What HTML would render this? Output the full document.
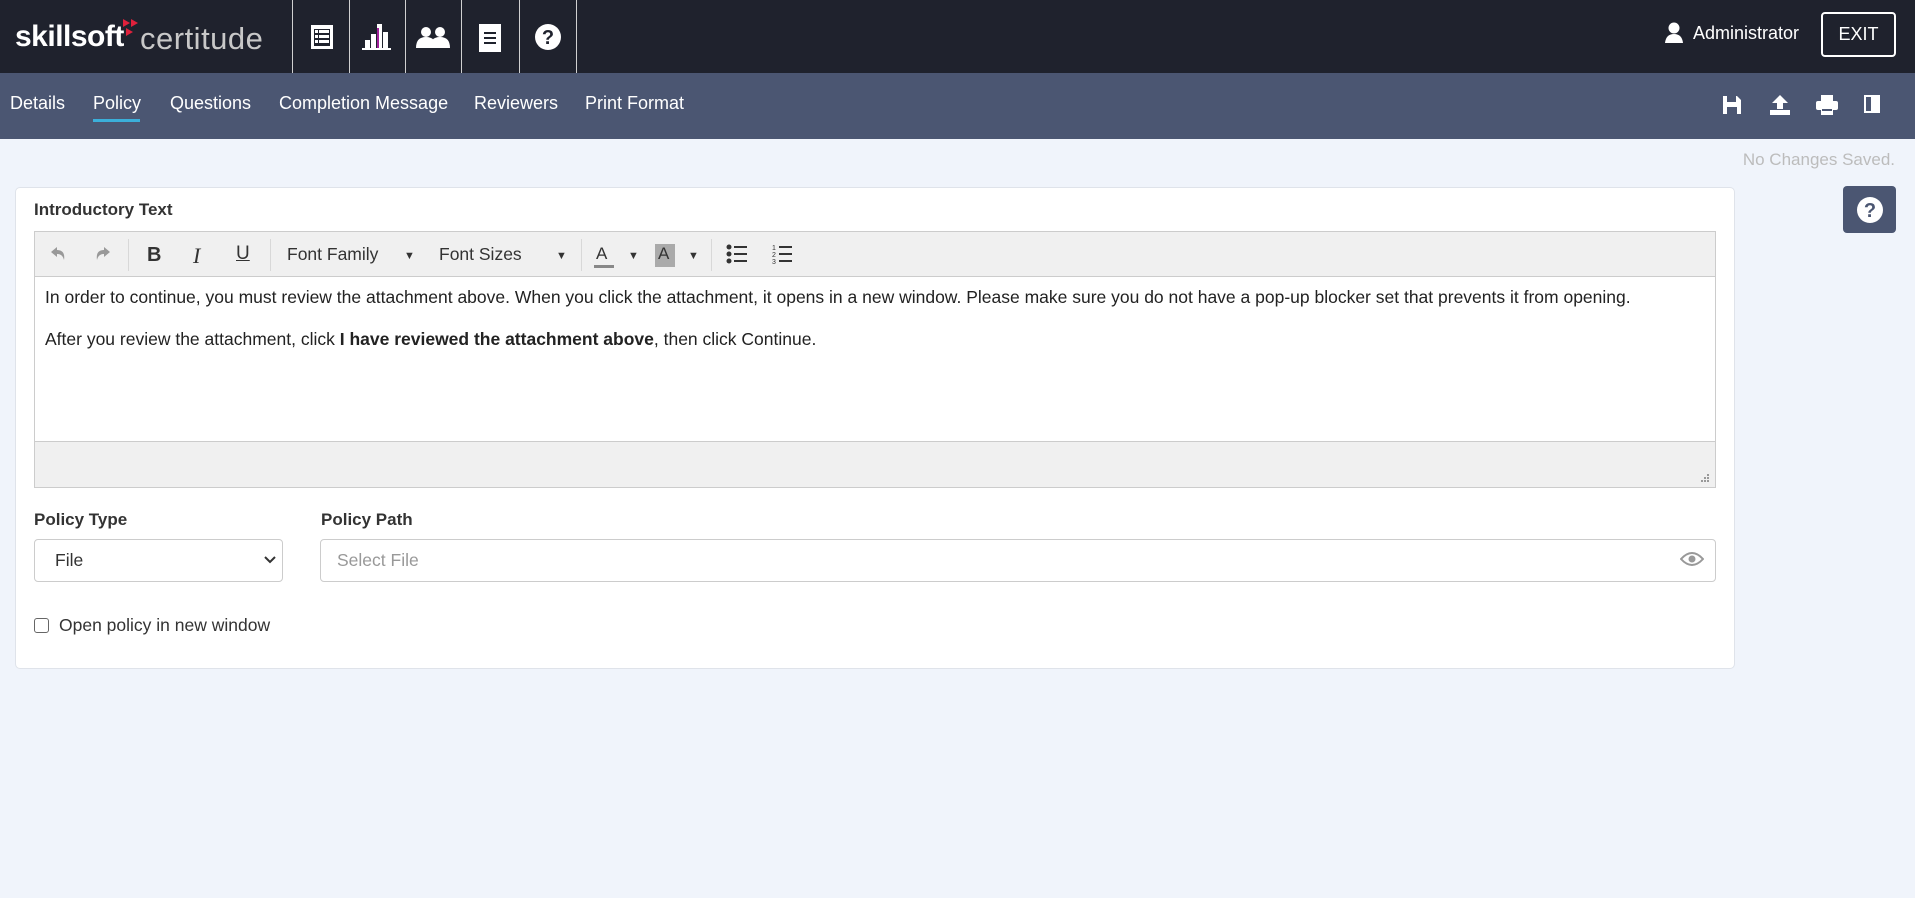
<!DOCTYPE html>
<html><head><meta charset="utf-8"><style>
*{box-sizing:border-box;margin:0;padding:0}
body{width:1915px;height:898px;background:#f0f4fb;font-family:"Liberation Sans",Arial,sans-serif;position:relative;overflow:hidden;color:#333}
.abs{position:absolute}
.top{left:0;top:0;width:1915px;height:73px;background:#1f222d}
.sep{top:0;width:1px;height:73px;background:#d0d0d0}
.sub{left:0;top:73px;width:1915px;height:66px;background:#4b5672}
.tab{top:93px;color:#fff;font-size:18px}
.card{left:15px;top:187px;width:1720px;height:482px;background:#fff;border:1px solid #dfe3ea;border-radius:5px}
.lbl{font-weight:bold;font-size:17px;color:#333}
.tb{color:#333;font-size:18px}
.ar{color:#333;font-size:11px;top:250px}
</style></head><body>
<div class="abs top"></div>
<div class="abs" style="left:15px;top:20px;font-size:30px;color:#fff;letter-spacing:-0.5px"><b style="font-weight:bold">skillsoft</b></div>
<svg class="abs" style="left:123px;top:19px" width="20" height="18"><polygon points="0,0 7,4 0,8" fill="#e0213c"/><polygon points="8,0 15,4 8,8" fill="#e0213c"/><polygon points="3,9 10,13 3,17" fill="#e0213c"/></svg>
<div class="abs" style="left:140px;top:21px;font-size:31px;color:#c8c8c8;font-weight:300;letter-spacing:0.5px">certitude</div>
<div class="abs sep" style="left:292px"></div><div class="abs sep" style="left:349px"></div><div class="abs sep" style="left:405px"></div><div class="abs sep" style="left:461px"></div><div class="abs sep" style="left:519px"></div><div class="abs sep" style="left:576px"></div>
<svg class="abs" style="left:310px;top:24px" width="24" height="26"><rect x="1" y="1" width="22" height="24" fill="#fff"/><rect x="4" y="5" width="16" height="17" fill="#1f222d"/><g fill="#fff"><rect x="5" y="6" width="3" height="3"/><rect x="9" y="6" width="10" height="3"/><rect x="5" y="11" width="3" height="3"/><rect x="9" y="11" width="10" height="3"/><rect x="5" y="16" width="3" height="3"/><rect x="9" y="16" width="10" height="3"/></g></svg>
<svg class="abs" style="left:362px;top:22px" width="30" height="28"><g fill="#fff"><rect x="3" y="18" width="5" height="8"/><rect x="9" y="12" width="5" height="14"/><rect x="15" y="2" width="5" height="24"/><rect x="21" y="10" width="5" height="16"/><rect x="0" y="26" width="29" height="2"/></g><rect x="15" y="6" width="2" height="20" fill="#a0209a"/></svg>
<svg class="abs" style="left:414px;top:26px" width="40" height="24"><g fill="#fff"><circle cx="12" cy="6" r="5"/><path d="M2 22 Q2 11 12 11 Q22 11 22 22Z"/><circle cx="26" cy="6" r="5"/><path d="M16 22 Q16 11 26 11 Q36 11 36 22Z"/></g></svg>
<svg class="abs" style="left:479px;top:22px" width="22" height="30"><rect x="0" y="2" width="22" height="28" fill="#fff"/><g fill="#1f222d"><rect x="5" y="10" width="12" height="2"/><rect x="5" y="15" width="12" height="2"/><rect x="5" y="20" width="12" height="2"/></g></svg>
<svg class="abs" style="left:534px;top:23px" width="28" height="28"><circle cx="14" cy="14" r="13" fill="#fff"/><text x="14" y="21" text-anchor="middle" font-family="Liberation Sans" font-weight="bold" font-size="20" fill="#1f222d">?</text></svg>
<svg class="abs" style="left:1664px;top:22px" width="20" height="22"><circle cx="10" cy="6" r="5.5" fill="#fff"/><path d="M1 21 Q2 12 10 12 Q18 12 19 21Z" fill="#fff"/></svg>
<div class="abs" style="left:1693px;top:23px;color:#fff;font-size:18px">Administrator</div>
<div class="abs" style="left:1821px;top:12px;width:75px;height:45px;border:2px solid #fff;border-radius:4px;color:#fff;font-size:18px;text-align:center;line-height:41px">EXIT</div>
<div class="abs sub"></div>
<div class="abs tab" style="left:10px">Details</div>
<div class="abs tab" style="left:93px">Policy</div>
<div class="abs" style="left:93px;top:119px;width:47px;height:3px;background:#3bafda"></div>
<div class="abs tab" style="left:170px">Questions</div>
<div class="abs tab" style="left:279px">Completion Message</div>
<div class="abs tab" style="left:474px">Reviewers</div>
<div class="abs tab" style="left:585px">Print Format</div>
<svg class="abs" style="left:1722px;top:95px" width="20" height="20"><path d="M1 1H15L19 5V19H1Z" fill="#fff"/><rect x="5" y="1" width="9" height="6" fill="#4b5672"/><rect x="5" y="12" width="10" height="7" fill="#4b5672"/></svg>
<svg class="abs" style="left:1769px;top:95px" width="22" height="20"><path d="M11 0L19 8H14V14H8V8H3Z" fill="#fff"/><rect x="1" y="15" width="20" height="5" fill="#fff"/></svg>
<svg class="abs" style="left:1816px;top:95px" width="22" height="20"><rect x="5" y="0" width="12" height="6" fill="#fff"/><rect x="0" y="6" width="22" height="9" rx="2" fill="#fff"/><rect x="5" y="13" width="12" height="7" fill="#fff"/><rect x="6" y="14" width="10" height="2" fill="#4b5672"/></svg>
<svg class="abs" style="left:1864px;top:94px" width="18" height="20"><rect x="1" y="2" width="14" height="16" fill="none" stroke="#fff" stroke-width="2"/><path d="M7 1L16 3V19L7 17Z" fill="#fff"/></svg>
<div class="abs" style="right:20px;top:150px;color:#bcbcbc;font-size:17px">No Changes Saved.</div>
<div class="abs" style="left:1843px;top:186px;width:53px;height:47px;background:#4b5672;border-radius:4px"></div>
<svg class="abs" style="left:1856px;top:196px" width="28" height="28"><circle cx="14" cy="14" r="13" fill="#fff"/><text x="14" y="21" text-anchor="middle" font-family="Liberation Sans" font-weight="bold" font-size="20" fill="#4b5672">?</text></svg>
<div class="abs card"></div>
<div class="abs lbl" style="left:34px;top:200px">Introductory Text</div>
<div class="abs" style="left:34px;top:231px;width:1682px;height:257px;border:1px solid #ccc;background:#fff"></div>
<div class="abs" style="left:35px;top:232px;width:1680px;height:45px;background:#f0f0f0;border-bottom:1px solid #ccc"></div>
<div class="abs" style="left:35px;top:441px;width:1680px;height:46px;background:#f0f0f0;border-top:1px solid #ccc"></div>
<div class="abs" style="left:128px;top:239px;width:1px;height:32px;background:#d8d8d8"></div>
<div class="abs" style="left:270px;top:239px;width:1px;height:32px;background:#d8d8d8"></div>
<div class="abs" style="left:581px;top:239px;width:1px;height:32px;background:#d8d8d8"></div>
<div class="abs" style="left:711px;top:239px;width:1px;height:32px;background:#d8d8d8"></div>
<svg class="abs" style="left:50px;top:246px" width="16" height="14"><path d="M1 6L7 1V4C13 4 15 8 14 14C13 10 11 8 7 8V11Z" fill="#999"/></svg>
<svg class="abs" style="left:95px;top:246px" width="16" height="14"><path d="M15 6L9 1V4C3 4 1 8 2 14C3 10 5 8 9 8V11Z" fill="#999"/></svg>
<div class="abs tb" style="left:147px;top:244px;font-weight:bold;font-size:20px">B</div>
<div class="abs tb" style="left:193px;top:243px;font-family:'Liberation Serif';font-style:italic;font-size:22px">I</div>
<div class="abs tb" style="left:236px;top:243px;text-decoration:underline;font-size:19px">U</div>
<div class="abs tb" style="left:287px;top:244px;font-size:17.5px">Font Family</div>
<div class="abs ar" style="left:404px">▼</div>
<div class="abs tb" style="left:439px;top:244px;font-size:17.5px">Font Sizes</div>
<div class="abs ar" style="left:556px">▼</div>
<div class="abs tb" style="left:596px;top:244px;font-size:17px">A</div>
<div class="abs" style="left:594px;top:265px;width:20px;height:3px;background:#888"></div>
<div class="abs ar" style="left:628px">▼</div>
<div class="abs" style="left:655px;top:244px;width:20px;height:23px;background:#aaa"></div>
<div class="abs tb" style="left:658px;top:244px;font-size:17px">A</div>
<div class="abs ar" style="left:688px">▼</div>
<svg class="abs" style="left:726px;top:244px" width="22" height="20"><g fill="#333"><circle cx="3" cy="3" r="2.5"/><circle cx="3" cy="10" r="2.5"/><circle cx="3" cy="17" r="2.5"/><rect x="8" y="2" width="13" height="2"/><rect x="8" y="9" width="13" height="2"/><rect x="8" y="16" width="13" height="2"/></g></svg>
<svg class="abs" style="left:772px;top:243px" width="22" height="22"><g fill="#333"><text x="0" y="7" font-size="7" font-family="Liberation Sans">1</text><text x="0" y="14" font-size="7" font-family="Liberation Sans">2</text><text x="0" y="21" font-size="7" font-family="Liberation Sans">3</text><rect x="7" y="3" width="13" height="2"/><rect x="7" y="10" width="13" height="2"/><rect x="7" y="17" width="13" height="2"/></g></svg>
<div class="abs" style="left:45px;top:287px;font-size:17.5px;color:#222;white-space:nowrap">In order to continue, you must review the attachment above. When you click the attachment, it opens in a new window. Please make sure you do not have a pop-up blocker set that prevents it from opening.</div>
<div class="abs" style="left:45px;top:329px;font-size:17.5px;color:#222;white-space:nowrap">After you review the attachment, click <b>I have reviewed the attachment above</b>, then click Continue.</div>
<svg class="abs" style="left:1698px;top:473px" width="12" height="12"><g fill="#999"><rect x="9" y="1" width="2" height="2"/><rect x="6" y="4" width="2" height="2"/><rect x="9" y="4" width="2" height="2"/><rect x="3" y="7" width="2" height="2"/><rect x="6" y="7" width="2" height="2"/><rect x="9" y="7" width="2" height="2"/></g></svg>
<div class="abs lbl" style="left:34px;top:510px">Policy Type</div>
<div class="abs lbl" style="left:321px;top:510px">Policy Path</div>
<div class="abs" style="left:34px;top:539px;width:249px;height:43px;border:1px solid #ccc;border-radius:4px;background:#fff"></div>
<div class="abs" style="left:55px;top:550px;font-size:17.5px;color:#333">File</div>
<svg class="abs" style="left:263px;top:555px" width="14" height="10"><path d="M2 2L7 7L12 2" fill="none" stroke="#333" stroke-width="2"/></svg>
<div class="abs" style="left:320px;top:539px;width:1396px;height:43px;border:1px solid #ccc;border-radius:4px;background:#fff"></div>
<div class="abs" style="left:337px;top:550px;font-size:17.5px;color:#999">Select File</div>
<svg class="abs" style="left:1680px;top:551px" width="24" height="16"><path d="M1 8Q12 -4 23 8Q12 20 1 8Z" fill="none" stroke="#999" stroke-width="2"/><circle cx="12" cy="8" r="3.5" fill="#999"/></svg>
<div class="abs" style="left:34px;top:618px;width:15px;height:15px;border:1px solid #666;border-radius:3px;background:#fff"></div>
<div class="abs" style="left:59px;top:615px;font-size:17.5px;color:#333">Open policy in new window</div>
</body></html>
